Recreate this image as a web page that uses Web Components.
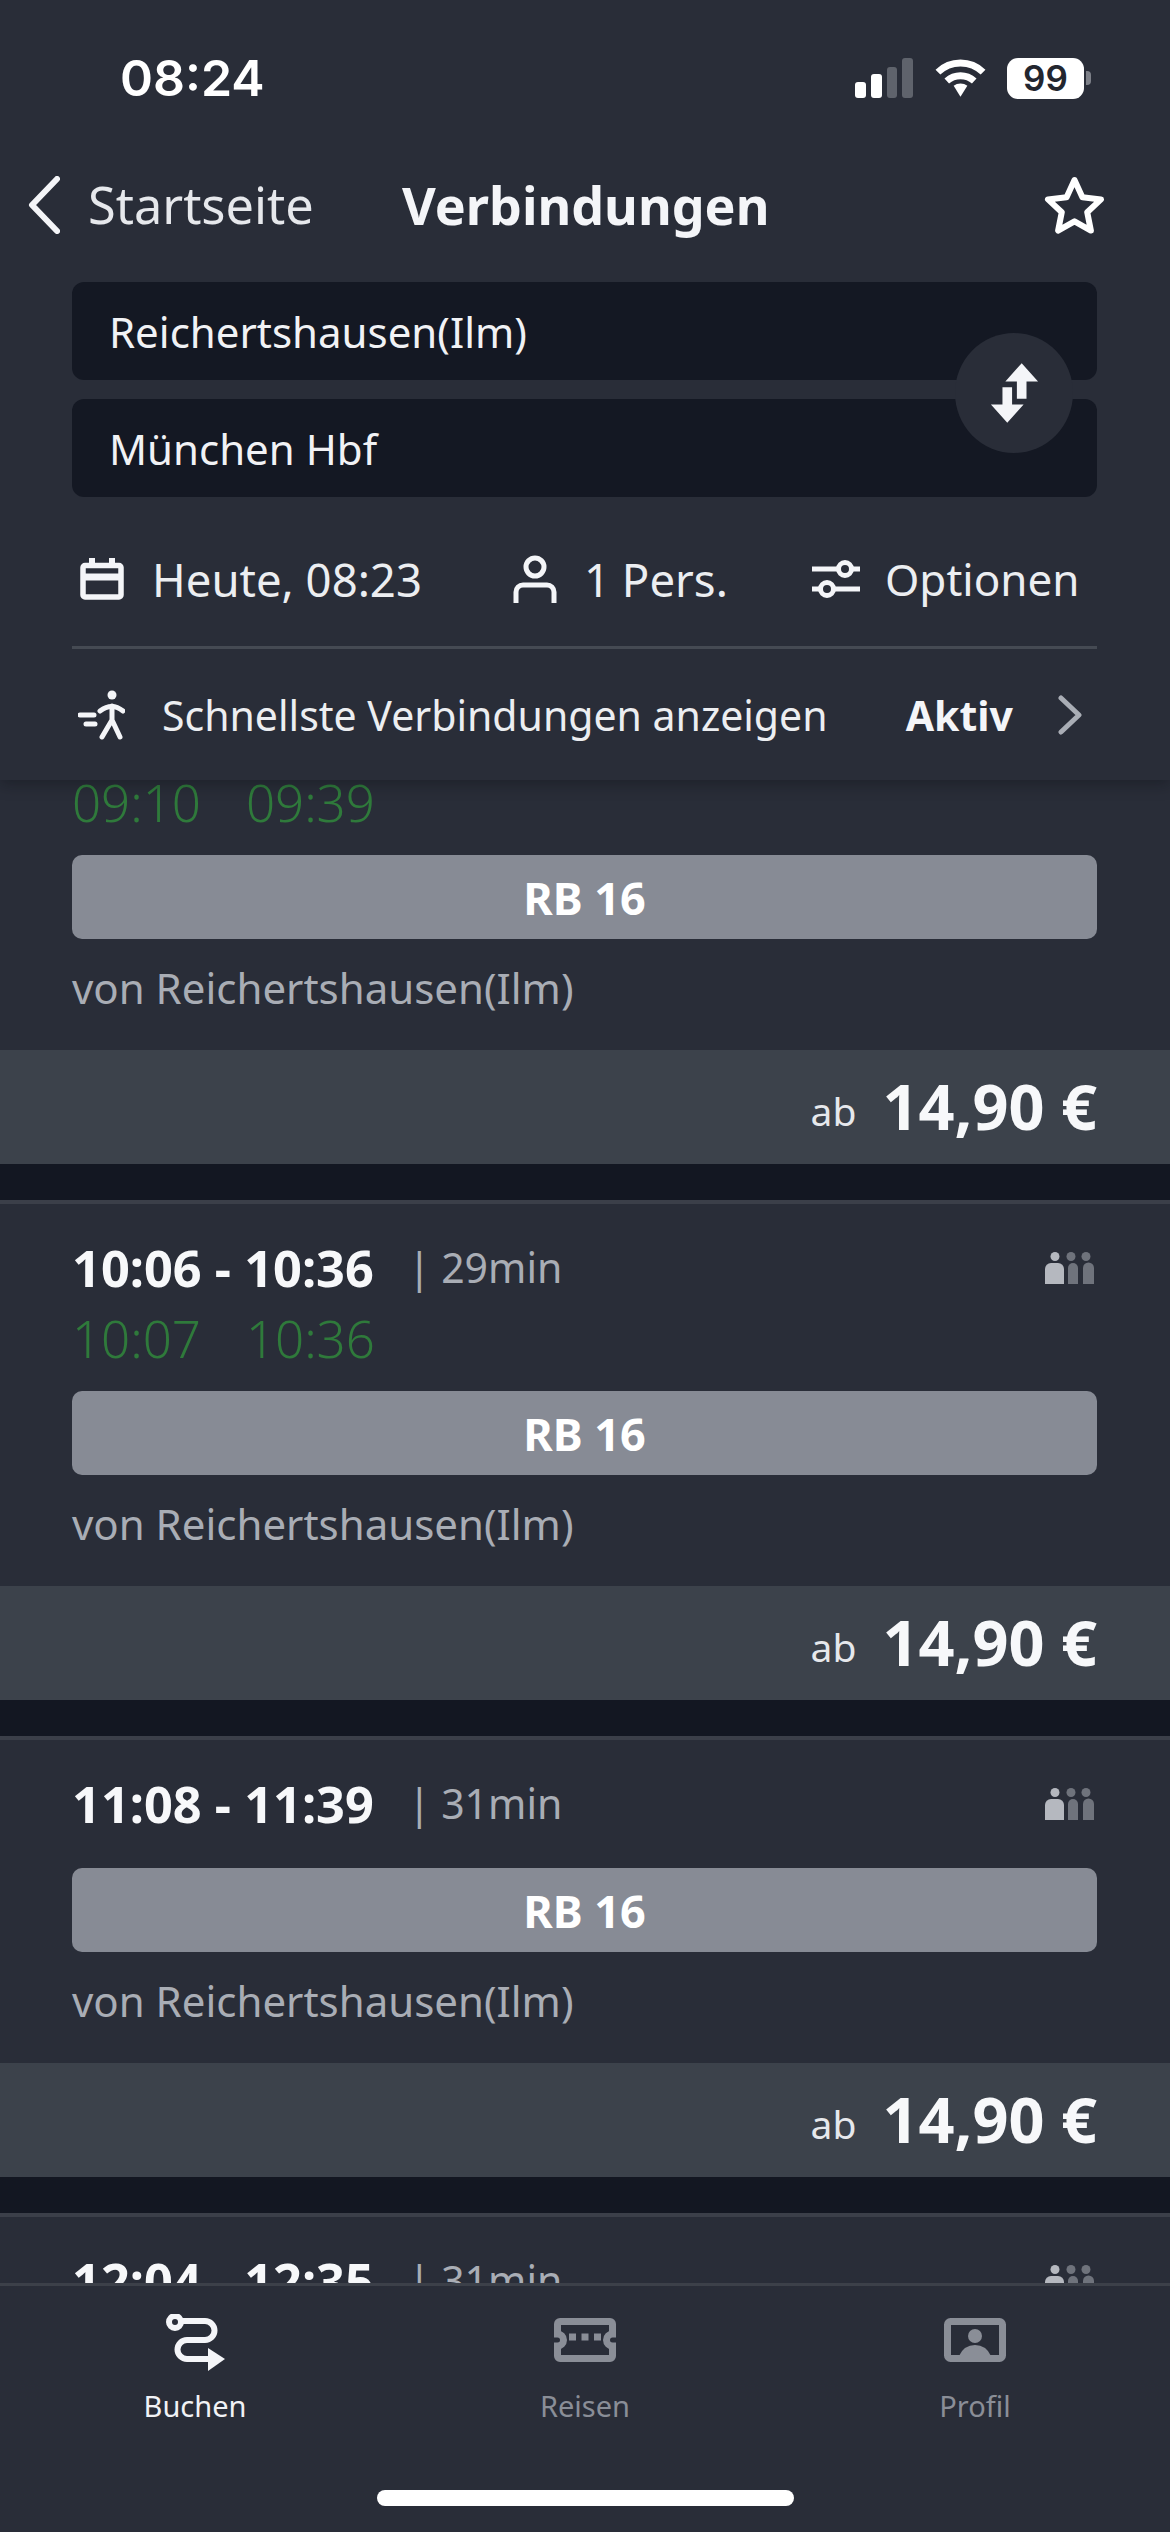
<!DOCTYPE html>
<html lang="de">
<head>
<meta charset="utf-8">
<title>Verbindungen</title>
<style>
  html, body { margin: 0; padding: 0; background: #131722; }
  body { font-family: "Noto Sans", "Open Sans", sans-serif; color: #f4f5f8; }
</style>
</head>
<body>
<app-shell>
  <search-header slot="header"></search-header>
  <connection-card late="09:10,09:39"></connection-card>
  <connection-card time="10:06 - 10:36" duration="29min" late="10:07,10:36"></connection-card>
  <connection-card time="11:08 - 11:39" duration="31min"></connection-card>
  <connection-card time="12:04 - 12:35" duration="31min" partial></connection-card>
  <tab-bar slot="tabs"></tab-bar>
</app-shell>

<script>
// app-shell.js
class AppShell extends HTMLElement {
    constructor() {
        super();
        this.attachShadow({ mode: "open" });
    }

    connectedCallback() {
        this.shadowRoot.innerHTML = `
            <style>
                :host {
                    display: flex;
                    flex-direction: column;
                    width: 1170px;
                    height: 2532px;
                    overflow: hidden;
                }
                .header { position: relative; z-index: 2; flex: none; }
                .list { flex: 1; min-height: 0; overflow: hidden; }
                /* list is scrolled: first card sits partly under the header */
                .scroll { margin-top: -116px; display: flex; flex-direction: column; gap: 36px; }
                .tabs { flex: none; position: relative; z-index: 2; }
            </style>
            <div class="header"><slot name="header"></slot></div>
            <div class="list"><div class="scroll"><slot></slot></div></div>
            <div class="tabs"><slot name="tabs"></slot></div>
        `;
    }
}

// status-bar.js
class StatusBar extends HTMLElement {
    constructor() {
        super();
        this.attachShadow({ mode: "open" });
    }

    connectedCallback() {
        this.shadowRoot.innerHTML = `
            <style>
                :host {
                    display: flex;
                    align-items: center;
                    justify-content: space-between;
                    height: 156px;
                    padding: 0 79px 0 120px;
                }
                .time {
                    font: 600 50px Inter, "Liberation Sans", sans-serif;
                    color: #fff;
                }
                .right { display: flex; align-items: center; gap: 21px; }
                .signal { display: block; margin-right: 1px; }
                .battery { display: flex; align-items: center; gap: 2px; }
                .level {
                    width: 77px;
                    height: 41px;
                    border-radius: 11px;
                    background: #fff;
                    color: #23262f;
                    font: 600 35px/41px Inter, "Liberation Sans", sans-serif;
                    text-align: center;
                }
                .nub { width: 5px; height: 14px; background: #7d8088; border-radius: 0 4px 4px 0; }
            </style>
            <span class="time">08:24</span>
            <div class="right">
                <svg class="signal" width="58" height="40" viewBox="0 0 58 40">
                    <rect x="0" y="24" width="11" height="16" rx="3" fill="#fff"/>
                    <rect x="16" y="16" width="11" height="24" rx="3" fill="#fff"/>
                    <rect x="32" y="9" width="10" height="31" rx="3" fill="#5f636c"/>
                    <rect x="47" y="0" width="11" height="40" rx="3" fill="#5f636c"/>
                </svg>
                <svg width="51" height="40" viewBox="0 0 52 40" fill="none" stroke="#fff" stroke-width="7">
                    <path d="M3 14 A33 33 0 0 1 49 14"/>
                    <path d="M12 23 A21 21 0 0 1 40 23"/>
                    <path d="M19 28 L26 39 L33 28 A11 11 0 0 0 19 28 Z" fill="#fff" stroke="none"/>
                </svg>
                <div class="battery"><div class="level">99</div><div class="nub"></div></div>
            </div>
        `;
    }
}

// nav-bar.js
class NavBar extends HTMLElement {
    constructor() {
        super();
        this.attachShadow({ mode: "open" });
    }

    connectedCallback() {
        this.shadowRoot.innerHTML = `
            <style>
                :host {
                    display: flex;
                    align-items: center;
                    height: 97px;
                    margin-bottom: 29px;
                    padding: 0 65px 0 28px;
                }
                .back { display: flex; align-items: center; gap: 28px; width: 374px; font-size: 50.5px; color: #e6e8ec; }
                .title { font-size: 52px; font-weight: 700; flex: 1; color: #f4f5f8; }
            </style>
            <div class="back">
                <svg width="32" height="58" viewBox="0 0 32 58" fill="none" stroke="#f4f5f8" stroke-width="6" stroke-linecap="round" stroke-linejoin="round"><path d="M29 3 L4 29 L29 55"/></svg>
                <span>Startseite</span>
            </div>
            <span class="title">Verbindungen</span>
            <svg width="61" height="58" viewBox="0 0 61 58" fill="none" stroke="#fff" stroke-width="6" stroke-linejoin="round"><path d="M30.5 4 L38.4 21.2 L57 23.4 L43.2 36.2 L46.9 54.6 L30.5 45.4 L14.1 54.6 L17.8 36.2 L4 23.4 L22.6 21.2 Z"/></svg>
        `;
    }
}

// search-header.js
class SearchHeader extends HTMLElement {
    constructor() {
        super();
        this.attachShadow({ mode: "open" });
    }

    connectedCallback() {
        this.shadowRoot.innerHTML = `
            <style>
                :host {
                    display: block;
                    height: 780px;
                    background: #292d38;
                    box-shadow: 0 4px 14px rgba(10, 12, 18, .35);
                }
                .fields {
                    position: relative;
                    display: flex;
                    flex-direction: column;
                    gap: 19px;
                    margin: 0 73px 0 72px;
                }
                .field {
                    height: 98px;
                    display: flex;
                    align-items: center;
                    padding-left: 37px;
                    background: #141823;
                    border-radius: 12px;
                    font-size: 42px;
                    color: #f1f2f5;
                }
                .swap {
                    position: absolute;
                    right: 24px;
                    top: 51px;
                    width: 118px;
                    height: 120px;
                    border-radius: 50%;
                    background: #292d38;
                    display: flex;
                    align-items: center;
                    justify-content: center;
                }
                .options {
                    display: grid;
                    grid-template-columns: 433px 299px 1fr;
                    align-items: center;
                    height: 134px;
                    padding: 15px 0 0 80px;
                    font-size: 45.5px;
                    color: #eceef1;
                }
                .opt { display: flex; align-items: center; white-space: nowrap; }
                .opt svg { display: block; flex: none; }
                .opt.small { font-size: 44px; }
                .rule { height: 3px; margin: 0 73px 0 72px; background: #454a53; }
                .fast {
                    display: flex;
                    align-items: center;
                    height: 132px;
                    padding: 0 88px 0 78px;
                    font-size: 41px;
                    color: #eceef1;
                }
                .fast .label { margin-left: 37px; flex: 1; }
                .fast b { font-weight: 700; color: #f4f5f8; margin-right: 45px; }
            </style>
            <status-bar></status-bar>
            <nav-bar></nav-bar>
            <div class="fields">
                <div class="field">Reichertshausen(Ilm)</div>
                <div class="field">München Hbf</div>
                <div class="swap">
                    <svg width="50" height="62" viewBox="988 362 52 62" fill="#f4f5f8">
                        <path d="M1022 362 L1039 381 H1027 V399 H1017 V381 H1005 Z"/>
                        <path d="M1002 387 H1012 V405 H1024 L1007 424 L990 405 H1002 Z"/>
                    </svg>
                </div>
            </div>
            <div class="options">
                <div class="opt" style="gap:28px">
                    <svg width="44" height="42" viewBox="0 0 44 42" fill="none" stroke="#f4f5f8" stroke-width="5.5">
                        <rect x="3" y="7.5" width="38" height="31.5" rx="2"/>
                        <path d="M12 0 V8 M32 0 V8" stroke-width="6"/>
                        <path d="M3 19 H41" stroke-width="7"/>
                    </svg>
                    <span>Heute, 08:23</span>
                </div>
                <div class="opt" style="gap:27px">
                    <svg width="44" height="48" viewBox="0 0 44 48" fill="none" stroke="#f4f5f8" stroke-width="5">
                        <circle cx="22" cy="12" r="9"/>
                        <path d="M3 48 V37 a7 7 0 0 1 7-7 h24 a7 7 0 0 1 7 7 V48"/>
                    </svg>
                    <span>1 Pers.</span>
                </div>
                <div class="opt small" style="gap:25px">
                    <svg width="48" height="38" viewBox="0 0 48 38" fill="none" stroke="#f4f5f8" stroke-width="5">
                        <path d="M0 9 H26 M40 9 H48 M0 29 H8 M22 29 H48"/>
                        <circle cx="33" cy="9" r="6.5"/>
                        <circle cx="15" cy="29" r="6.5"/>
                    </svg>
                    <span>Optionen</span>
                </div>
            </div>
            <div class="rule"></div>
            <div class="fast">
                <svg width="47" height="50" viewBox="0 0 47 50" fill="none" stroke="#f4f5f8" stroke-width="5" stroke-linecap="round" stroke-linejoin="round">
                    <circle cx="34" cy="5" r="4.5" fill="#f4f5f8" stroke="none"/>
                    <path d="M2 25 H16 M8 34 H17"/>
                    <path d="M22 21 Q34 12 45 21"/>
                    <path d="M34 16 V30 L24 47 M34 30 L42 47"/>
                </svg>
                <span class="label">Schnellste Verbindungen anzeigen</span>
                <b>Aktiv</b>
                <svg width="24" height="40" viewBox="0 0 24 40" fill="none" stroke="#a9adb5" stroke-width="5" stroke-linecap="round" stroke-linejoin="round"><path d="M3 3 L21 20 L3 37"/></svg>
            </div>
        `;
    }
}

// connection-card.js
class ConnectionCard extends HTMLElement {
    constructor() {
        super();
        this.attachShadow({ mode: "open" });
    }

    connectedCallback() {
        const time = this.getAttribute("time");
        const duration = this.getAttribute("duration");
        const late = this.getAttribute("late");
        const times = late ? late.split(",") : [];
        // last card is cut off by the tab bar, only its first row shows
        const partial = this.hasAttribute("partial");

        this.shadowRoot.innerHTML = `
            <style>
                :host {
                    display: block;
                    flex: none;
                    background: #292d38;
                    border-top: 4px solid #3b3f49;
                }
                .body { padding: 39px 73px 37px 72px; }
                .top { display: flex; align-items: center; height: 48px; padding-bottom: 2px; }
                .time { font-size: 50.5px; font-weight: 700; color: #f7f8fa; white-space: pre; }
                .dur { font-size: 41px; color: #a9adb5; margin-left: 34px; flex: 1; }
                .top svg { margin: 2px 2px 0 0; }
                .late {
                    display: flex;
                    gap: 45px;
                    height: 39px;
                    line-height: 50px;
                    margin-top: 20px;
                    font-size: 51px;
                    font-weight: 300;
                    color: #2f7a3b;
                }
                .line {
                    display: flex;
                    align-items: center;
                    justify-content: center;
                    height: 84px;
                    margin-top: 39px;
                    background: #878b95;
                    border-radius: 10px;
                    font-size: 45px;
                    font-weight: 700;
                    color: #fff;
                }
                .from { height: 50px; line-height: 50px; margin-top: 24px; font-size: 42px; color: #a9adb5; }
                .price {
                    display: flex;
                    align-items: center;
                    justify-content: flex-end;
                    gap: 26px;
                    height: 111px;
                    padding: 0 73px 3px 0;
                    background: #3c424b;
                }
                .ab { font-size: 39px; color: #e6e8ec; padding-top: 10px; }
                .amount { font-size: 63px; font-weight: 700; color: #f7f8fa; }
            </style>
            <div class="body">
                <div class="top">
                    ${time ? `<span class="time">${time}</span>
                    <span class="dur">| ${duration}</span>
                    <svg width="50" height="32" viewBox="0 0 50 32">
                        <circle cx="10" cy="4.5" r="4.5" fill="#b5b8bf"/>
                        <circle cx="26" cy="4.5" r="4.5" fill="#6f737c"/>
                        <circle cx="41" cy="4.5" r="4.5" fill="#6f737c"/>
                        <path d="M0 32 V17 a6 6 0 0 1 6-6 h7 a6 6 0 0 1 6 6 V32 Z" fill="#b5b8bf"/>
                        <path d="M23 32 V16 a5 5 0 0 1 10 0 V32 Z" fill="#6f737c"/>
                        <path d="M38 32 V16 a5 5 0 0 1 11 0 V32 Z" fill="#6f737c"/>
                    </svg>` : ""}
                </div>
                ${times.length ? `<div class="late"><span>${times[0]}</span><span>${times[1]}</span></div>` : ""}
                ${partial ? "" : `<div class="line">RB 16</div>
                <div class="from">von Reichertshausen(Ilm)</div>`}
            </div>
            ${partial ? "" : `<div class="price">
                <span class="ab">ab</span>
                <span class="amount">14,90 €</span>
            </div>`}
        `;
    }
}

// tab-bar.js
class TabBar extends HTMLElement {
    constructor() {
        super();
        this.attachShadow({ mode: "open" });
    }

    connectedCallback() {
        this.shadowRoot.innerHTML = `
            <style>
                :host {
                    display: block;
                    height: 249px;
                    box-sizing: border-box;
                    background: #292d38;
                    border-top: 3px solid #3c4049;
                }
                .tabs { display: grid; grid-template-columns: repeat(3, 390px); padding-top: 26px; }
                .tab {
                    display: flex;
                    flex-direction: column;
                    align-items: center;
                    font-size: 29px;
                    color: #8a8e97;
                }
                .tab.on { color: #f1f2f5; }
                .icon { height: 60px; display: flex; align-items: center; margin-bottom: 14px; }
                .home { width: 417px; height: 16px; margin: 65px auto 0; background: #fff; border-radius: 8px; }
            </style>
            <div class="tabs">
                <div class="tab on">
                    <div class="icon">
                        <svg width="60" height="57" viewBox="164 2312 60 57" fill="none" stroke="#f4f5f8" stroke-width="6">
                            <circle cx="174" cy="2320" r="6"/>
                            <path d="M180 2319 H204 a9.5 9.5 0 0 1 0 19 H186 a9.5 9.5 0 0 0 0 19 H210"/>
                            <path d="M207 2346 L224 2357 L207 2369 Z" fill="#f4f5f8" stroke="none"/>
                        </svg>
                    </div>
                    <span>Buchen</span>
                </div>
                <div class="tab">
                    <div class="icon">
                        <svg width="62" height="44" viewBox="0 0 62 44" fill="none" stroke="#8a8e97" stroke-width="7" style="margin-top:-4px">
                            <path d="M6 3.5 H56 a2.5 2.5 0 0 1 2.5 2.5 V16 a6 6 0 0 0 0 12 V38 a2.5 2.5 0 0 1-2.5 2.5 H6 a2.5 2.5 0 0 1-2.5-2.5 V28 a6 6 0 0 0 0-12 V6 a2.5 2.5 0 0 1 2.5-2.5 Z"/>
                            <path d="M15 19 H47" stroke-width="7" stroke-dasharray="7 5.5"/>
                        </svg>
                    </div>
                    <span>Reisen</span>
                </div>
                <div class="tab">
                    <div class="icon">
                        <svg width="62" height="44" viewBox="0 0 62 44" fill="none" stroke="#8a8e97" stroke-width="7" style="margin-top:-4px">
                            <rect x="3.5" y="3.5" width="55" height="37" rx="3"/>
                            <circle cx="31" cy="18" r="7" fill="#8a8e97" stroke="none"/>
                            <path d="M15 38 Q20 27 31 27 Q42 27 47 38 Z" fill="#8a8e97" stroke="none"/>
                        </svg>
                    </div>
                    <span>Profil</span>
                </div>
            </div>
            <div class="home"></div>
        `;
    }
}

customElements.define("app-shell", AppShell);
customElements.define("status-bar", StatusBar);
customElements.define("nav-bar", NavBar);
customElements.define("search-header", SearchHeader);
customElements.define("connection-card", ConnectionCard);
customElements.define("tab-bar", TabBar);
</script>
</body>
</html>
